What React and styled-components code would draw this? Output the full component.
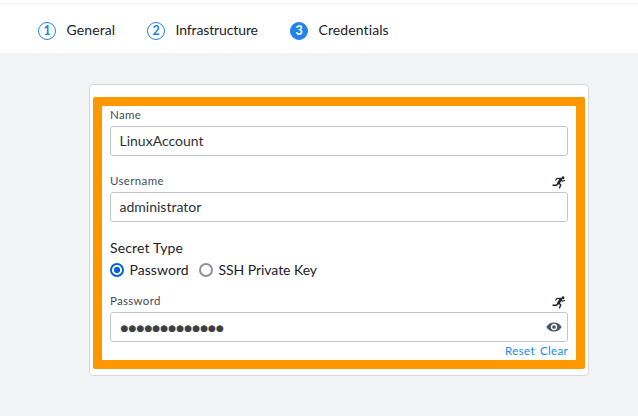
import React from "react";
import styled, { createGlobalStyle } from "styled-components";

const GlobalStyle = createGlobalStyle`
  * { box-sizing: border-box; }
  body {
    margin: 0;
    background: #f2f3f5;
    font-family: Lato, "Open Sans", sans-serif;
    color: #1c2128;
  }
`;

const Page = styled.div`
  height: 416px;
  overflow: hidden;
`;

const Steps = styled.nav`
  display: flex;
  height: 53px;
  padding: 22px 0 0 38px;
  background: linear-gradient(#fff 3px, #eff0f2 3px, #eff0f2 4px, #fff 4px);
`;

const Step = styled.div`
  display: flex;
  gap: 10.5px;
  width: ${(p) => p.$width}px;
  height: 18px;
  line-height: 16px;
  font-size: 14px;
  letter-spacing: ${(p) => p.$spacing}px;
  white-space: nowrap;
`;

const StepNumber = styled.span`
  flex: none;
  width: 18px;
  height: 18px;
  border: 1px solid #2383e9;
  border-radius: 50%;
  background: ${(p) => (p.$active ? "#2383e9" : "#fff")};
  color: ${(p) => (p.$active ? "#fff" : "#2383e9")};
  font-size: 12.5px;
  font-weight: 700;
  line-height: 16px;
  letter-spacing: 0;
  text-align: center;
`;

const Card = styled.section`
  width: 500px;
  height: 292px;
  margin: 31px 0 0 89px;
  padding: 12px 3px 0;
  border: 1px solid #d5d9dd;
  border-radius: 4px;
  background: #fff;
`;

const Highlight = styled.div`
  height: 272px;
  padding: 0 8px;
  border: 9px solid #ff9800;
  border-radius: 2px;
`;

const Field = styled.div`
  height: ${(p) => p.$height}px;
`;

const FieldHead = styled.div`
  display: flex;
  justify-content: space-between;
  height: 20px;
  padding-right: 2px;
`;

const Label = styled.label`
  height: 18px;
  line-height: 18px;
  font-size: 11.5px;
  letter-spacing: ${(p) => p.$spacing}px;
  color: #434d5b;
`;

const InputBox = styled.div`
  display: flex;
  align-items: center;
  height: 30px;
  padding: 0 5px 0 8.5px;
  border: 1px solid #c1c6cb;
  border-radius: 3px;
  background: #fff;
`;

const Input = styled.input`
  flex: 1;
  min-width: 0;
  height: 28px;
  padding: 0 0 1px;
  border: 0;
  outline: 0;
  background: transparent;
  color: #2c3137;
  font: 14px Lato, sans-serif;
  letter-spacing: ${(p) => p.$spacing}px;
`;

const Mask = styled.span`
  flex: 1;
  padding: 1px 0 0 1px;
  font: 9px/28px "DejaVu Sans", sans-serif;
  letter-spacing: 0.11px;
  color: #3c4045;
`;

const GroupTitle = styled.div`
  height: 22px;
  line-height: 20px;
  font-size: 14px;
  letter-spacing: 0.15px;
`;

const RadioRow = styled.div`
  display: flex;
  height: 32px;
`;

const Option = styled.label`
  display: flex;
  gap: 5.5px;
  width: ${(p) => p.$width}px;
  height: 20px;
  line-height: 19px;
  font-size: 14px;
  letter-spacing: ${(p) => p.$spacing}px;
  white-space: nowrap;
`;

const Radio = styled.span`
  flex: none;
  width: 14px;
  height: 14px;
  margin-top: 3px;
  border: 2px solid ${(p) => (p.$checked ? "#0060df" : "#8f8f9d")};
  border-radius: 50%;
  background: ${(p) =>
    p.$checked ? "radial-gradient(circle, #0060df 2.8px, #fff 3.4px)" : "#fff"};
`;

const Actions = styled.div`
  display: flex;
  justify-content: flex-end;
  gap: 5px;
  height: 18px;
  line-height: 18px;
`;

const Action = styled.a`
  color: #1389ea;
  font-size: 11.5px;
  letter-spacing: 0.35px;
`;

const RunnerSvg = styled.svg`
  width: 14px;
  height: 13px;
  margin-top: 4px;
`;

const Runner = () => (
  <RunnerSvg viewBox="0 0 14 13" fill="none" stroke="#20252c" strokeLinecap="round" strokeLinejoin="round">
    <circle cx="11" cy="1.7" r="1.5" fill="#20252c" stroke="none" />
    <path d="M8.8 3.2 6.5 7" strokeWidth="2.7" />
    <path d="M8.7 2.5 5.3 2.2 3.7 4.2M9.3 3.8 10.4 5.3 12.7 4.5" strokeWidth="1.1" />
    <path d="M6.1 7.3 4.5 9.2 1 9.2M6.8 7.1 8.8 8.9 7.5 11.8" strokeWidth="1.4" />
  </RunnerSvg>
);

const Eye = () => (
  <svg width="16" height="10" viewBox="0 0 16 10">
    <path d="M.3 5C2.2 1.9 4.8.5 8 .5S13.8 1.9 15.7 5C13.8 8.1 11.2 9.5 8 9.5S2.2 8.1.3 5Z" fill="#4a5866" />
    <circle cx="8" cy="5" r="2.5" fill="none" stroke="#fff" strokeWidth="1.3" />
    <circle cx="8" cy="5" r=".8" fill="#4a5866" />
  </svg>
);

export default function App() {
  return (
    <Page>
      <GlobalStyle />
      <Steps>
        <Step $width={109} $spacing={0.1}><StepNumber>1</StepNumber>General</Step>
        <Step $width={143} $spacing={-0.12}><StepNumber>2</StepNumber>Infrastructure</Step>
        <Step $width={120} $spacing={0.1}><StepNumber $active>3</StepNumber>Credentials</Step>
      </Steps>
      <Card>
        <Highlight>
          <Field $height={66}>
            <FieldHead><Label $spacing={0.35}>Name</Label></FieldHead>
            <InputBox><Input defaultValue="LinuxAccount" $spacing={0} /></InputBox>
          </Field>
          <Field $height={66}>
            <FieldHead><Label $spacing={0.35}>Username</Label><Runner /></FieldHead>
            <InputBox><Input defaultValue="administrator" $spacing={0} /></InputBox>
          </Field>
          <GroupTitle>Secret Type</GroupTitle>
          <RadioRow>
            <Option $width={89} $spacing={0.05}><Radio $checked />Password</Option>
            <Option $width={130} $spacing={-0.05}><Radio />SSH Private Key</Option>
          </RadioRow>
          <Field $height={68}>
            <FieldHead><Label $spacing={0.3}>Password</Label><Runner /></FieldHead>
            <InputBox><Mask>●●●●●●●●●●●●●</Mask><Eye /></InputBox>
            <Actions><Action>Reset</Action><Action>Clear</Action></Actions>
          </Field>
        </Highlight>
      </Card>
    </Page>
  );
}
